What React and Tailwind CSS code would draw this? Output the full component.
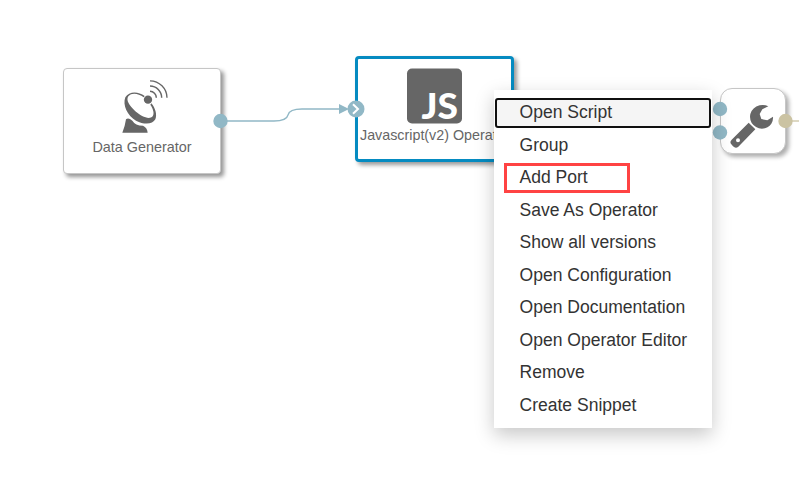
import React from "react";

const items = [
  "Open Script",
  "Group",
  "Add Port",
  "Save As Operator",
  "Show all versions",
  "Open Configuration",
  "Open Documentation",
  "Open Operator Editor",
  "Remove",
  "Create Snippet",
];

function Dish() {
  return (
    <svg className="h-[54px] w-[48px] shrink-0" viewBox="36 28 144 162" fill="#666">
      <path
        fillRule="evenodd"
        d="M104 79 C85 65 57 64 46 83 C37 106 52 138 78 153 C103 166 128 164 136 149 C142 135 136 115 124 101 L121 105 C131 120 133 132 128 140 C118 151 94 141 76 125 C58 107 47 92 55 80 C65 68 85 71 101 83 Z"
      />
      <circle cx="114" cy="90" r="12.5" />
      <path d="M37 189 Q45 170 48 149 Q53 144 60 148 L67 153 Q76 168 99 168 Q112 174 113 189 Z" />
      <g fill="none" stroke="#666">
        <path d="M120 33.5 A51 51 0 0 1 171 84" strokeWidth="4" />
        <path d="M120 49 A35 35 0 0 1 155 84" strokeWidth="4.5" />
        <path d="M120 65 A19 19 0 0 1 139 84" strokeWidth="4.5" />
      </g>
    </svg>
  );
}

function Wrench() {
  return (
    <svg className="h-[48px] w-[46px] shrink-0" viewBox="86 84 138 144" fill="#666">
      <path d="M204 94 Q192 88 178 91 Q156 97 150 117 Q147 132 154 144 Q165 160 185 161 Q204 159 213 146 Q219 137 218 125 L201 136 L183 132 L178 117 L186 103 Z" />
      <path
        fillRule="evenodd"
        d="M145 143 L165 163 L114 215 Q106 222 98 214 L93 208 Q87 201 94 194 Z M119 196 A6 6 0 1 0 107 196 A6 6 0 1 0 119 196 Z"
      />
    </svg>
  );
}

export default function App() {
  return (
    <main className="relative h-[477px] w-[799px] overflow-hidden bg-white font-['Liberation_Sans',Arial,sans-serif]">
      <section className="absolute left-[63px] top-[68px] flex h-[106px] w-[158px] flex-col items-center rounded-[4px] border border-[#c6c6c6] bg-white pt-[10.3px] pl-[7px] shadow-[3px_3px_4px_rgba(0,0,0,0.42)]">
        <Dish />
        <p className="mr-[7px] mt-[3.7px] whitespace-nowrap text-[14.4px] leading-5 text-[#666]">Data Generator</p>
      </section>

      <section className="absolute left-[355px] top-[56px] flex h-[106px] w-[159px] flex-col items-center rounded-[4px] border-[3px] border-[#058bc1] bg-white pt-[9px] shadow-[3px_3px_4px_rgba(0,0,0,0.4)]">
        <svg className="h-[56px] w-[55px] shrink-0 overflow-visible" viewBox="0 0 55 56">
          <rect x="0" y="0.5" width="55" height="55" rx="5" fill="#666" />
          <text x="14.5" y="50.7" fill="#fff" fontFamily="Lato, sans-serif" fontWeight="900" fontSize="35.5" textLength="36.5" lengthAdjust="spacingAndGlyphs">JS</text>
        </svg>
        <p className="ml-[2px] mt-px self-start whitespace-nowrap text-[14.3px] leading-5 text-[#666]">Javascript(v2) Operator</p>
      </section>

      <section className="absolute left-[720px] top-[88px] flex h-[66px] w-[66px] rounded-[12px] border border-[#c6c6c6] bg-white pl-[8px] pt-[14px] shadow-[3px_3px_4px_rgba(0,0,0,0.32)]">
        <Wrench />
      </section>

      <svg className="absolute inset-0 h-[477px] w-[799px]" viewBox="0 0 799 477">
        <path d="M220 121 H274 C283 121 287 119.5 288 115 C289 110.5 293 109 302 109 H340" fill="none" stroke="#91b8c6" strokeWidth="1.3" />
        <path d="M339 104 L349 109 L339 114 Z" fill="#91b8c6" />
        <circle cx="220.5" cy="121" r="7.2" fill="#91b8c6" />
        <circle cx="356" cy="109" r="8.5" fill="#91b8c6" />
        <path d="M353 104.3 L358 109 L353 113.7" fill="none" stroke="#fff" strokeWidth="2" />
        <circle cx="720" cy="109" r="7.2" fill="#91b8c6" />
        <circle cx="720" cy="132.5" r="7.2" fill="#91b8c6" />
        <path d="M785 121 H799" stroke="#cbc3a3" strokeWidth="1.3" />
        <circle cx="785.5" cy="121" r="7.2" fill="#cbc3a3" />
      </svg>

      <nav className="absolute left-[494px] top-[90px] h-[338px] w-[218px] bg-white pt-[6px] shadow-[0_7px_18px_rgba(0,0,0,0.22)]">
        <ul className="flex flex-col">
          {items.map((label, i) => (
            <li key={label} className="relative flex h-[32.5px] items-center pl-[25.5px] text-[17.55px] leading-[22px] text-[#333]">
              {i === 0 && <span className="absolute left-px top-[2px] h-[30px] w-[216px] rounded-[3px] border-2 border-[#101010] bg-[#f5f5f5]" />}
              {i === 2 && <span className="absolute left-[10px] top-[2px] h-[30px] w-[126px] border-[3px] border-[#ff4343]" />}
              <span className="relative whitespace-nowrap">{label}</span>
            </li>
          ))}
        </ul>
      </nav>
    </main>
  );
}
